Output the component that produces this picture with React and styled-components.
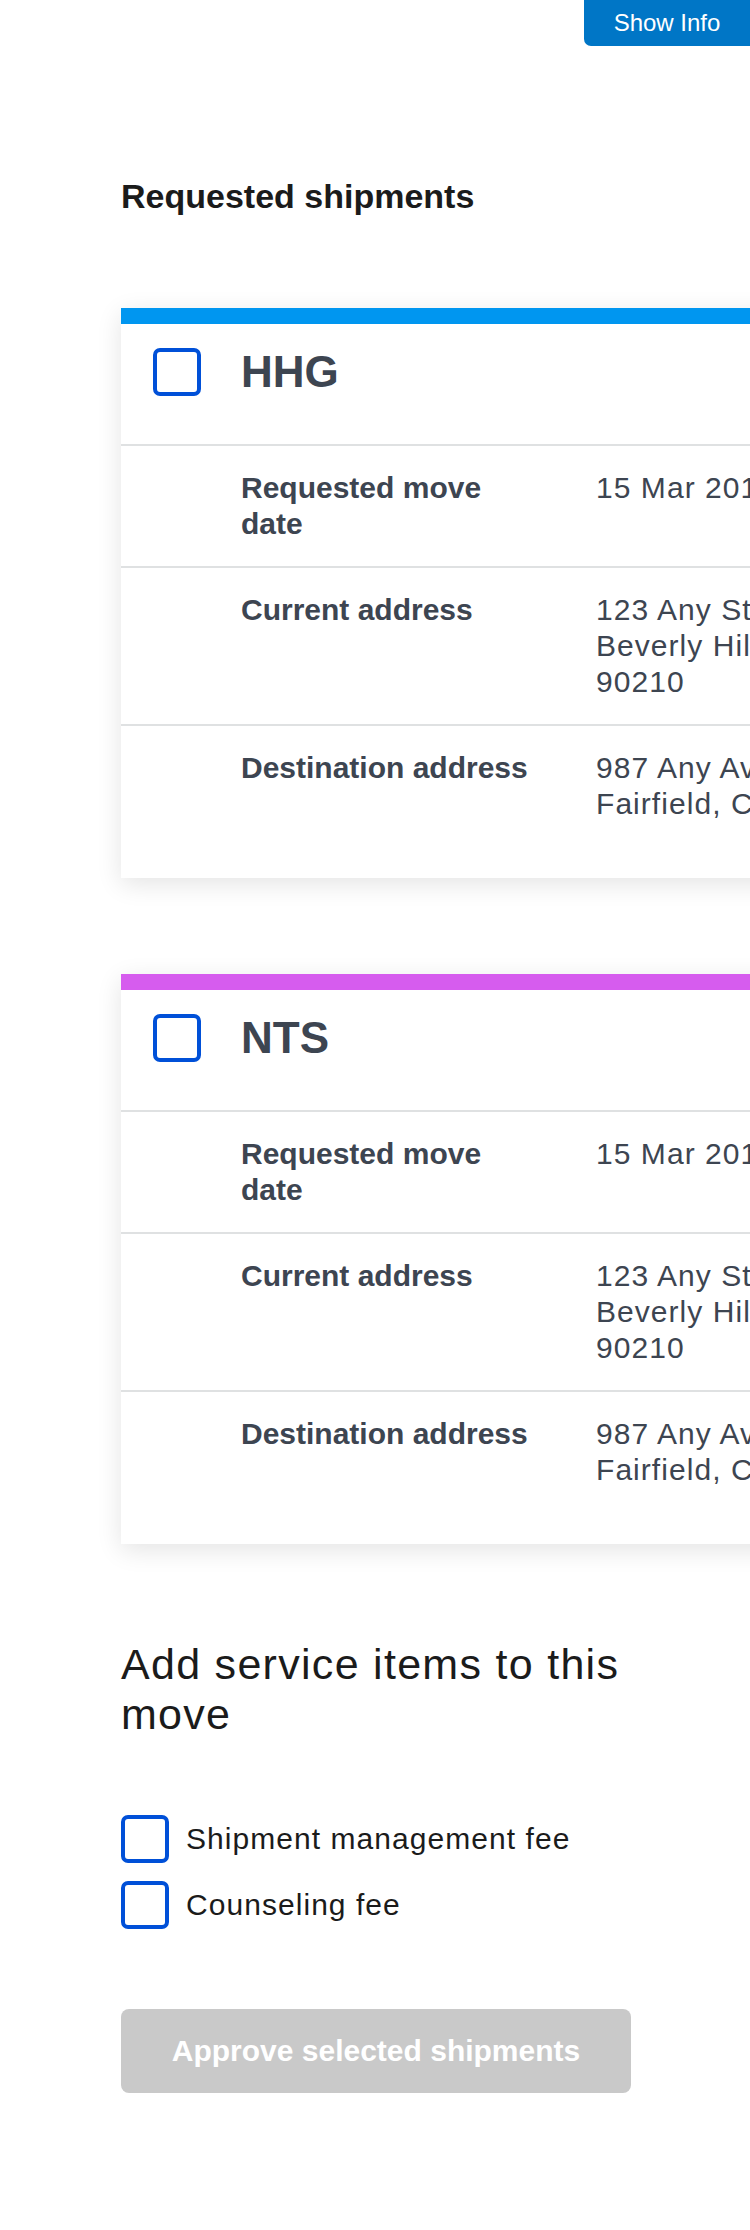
import React from "react";
import styled, { createGlobalStyle } from "styled-components";

const GlobalStyle = createGlobalStyle`
  html, body {
    margin: 0;
    padding: 0;
    overflow-x: hidden;
    background: #ffffff;
  }
  body {
    font-family: "Liberation Sans", Arial, sans-serif;
  }
`;

const Page = styled.div`
  position: relative;
  padding: 176px 0 120px 121px;
  min-height: 2230px;
  box-sizing: border-box;
`;

const InfoButton = styled.button`
  position: absolute;
  top: 0;
  right: 0;
  width: 166px;
  height: 46px;
  border: none;
  border-radius: 0 0 0 7px;
  background: #0076c6;
  color: #ffffff;
  font-family: "Liberation Sans", Arial, sans-serif;
  font-size: 24px;
  line-height: 46px;
  padding: 0;
  cursor: pointer;
`;

const SectionTitle = styled.h2`
  margin: 0;
  font-size: 34px;
  line-height: 40px;
  font-weight: 700;
  color: #1b1b1b;
`;

const CardList = styled.div`
  display: flex;
  flex-direction: column;
  gap: 96px;
  margin-top: 92px;
`;

const Card = styled.section`
  width: 900px;
  background: #ffffff;
  border-top: 16px solid ${(p) => p.$accent};
  padding-bottom: 32px;
  box-shadow: 0 6px 24px rgba(0, 0, 0, 0.11);
`;

const CardHeader = styled.div`
  display: flex;
  align-items: center;
  gap: 40px;
  padding: 24px 32px 48px;
`;

const Box = styled.span`
  display: inline-block;
  flex: 0 0 auto;
  width: 48px;
  height: 48px;
  box-sizing: border-box;
  border: 4px solid #0050d8;
  border-radius: 7px;
  background: #ffffff;
`;

const ShipmentType = styled.h3`
  margin: 0;
  font-size: 44px;
  line-height: 48px;
  font-weight: 700;
  color: #3d4551;
`;

const Row = styled.div`
  display: flex;
  border-top: 2px solid #dfe1e2;
  padding: 24px 0 24px 120px;
  font-size: 30px;
  line-height: 36px;
  color: #3d4551;
`;

const Label = styled.div`
  flex: 0 0 300px;
  margin-right: 55px;
  font-weight: 700;
`;

const Value = styled.div`
  letter-spacing: 0.035em;
  white-space: nowrap;
`;

const ServiceTitle = styled.h2`
  margin: 95px 0 0;
  width: 509px;
  font-size: 43px;
  line-height: 50px;
  font-weight: 400;
  letter-spacing: 0.03em;
  color: #1b1b1b;
`;

const OptionList = styled.div`
  display: flex;
  flex-direction: column;
  gap: 18px;
  margin-top: 76px;
`;

const Option = styled.label`
  display: flex;
  align-items: center;
  gap: 17px;
  font-size: 30px;
  line-height: 36px;
  letter-spacing: 0.035em;
  color: #1b1b1b;
`;

const ApproveButton = styled.button`
  display: block;
  margin-top: 80px;
  width: 510px;
  height: 84px;
  border: none;
  border-radius: 8px;
  background: #c9c9c9;
  color: #ffffff;
  font-family: "Liberation Sans", Arial, sans-serif;
  font-size: 30px;
  font-weight: 700;
  padding: 0;
  cursor: not-allowed;
`;

const shipments = [
  {
    type: "HHG",
    accent: "#0096f0",
  },
  {
    type: "NTS",
    accent: "#d65cee",
  },
];

const details = [
  { label: "Requested move date", lines: ["15 Mar 2018"] },
  {
    label: "Current address",
    lines: ["123 Any St.", "Beverly Hills, CA", "90210"],
  },
  { label: "Destination address", lines: ["987 Any Ave.", "Fairfield, CA 94535"] },
];

const ShipmentCard = ({ type, accent }) => (
  <Card $accent={accent}>
    <CardHeader>
      <Box />
      <ShipmentType>{type}</ShipmentType>
    </CardHeader>
    {details.map((d) => (
      <Row key={d.label}>
        <Label>{d.label}</Label>
        <Value>
          {d.lines.map((l) => (
            <div key={l}>{l}</div>
          ))}
        </Value>
      </Row>
    ))}
  </Card>
);

export default function App() {
  return (
    <>
      <GlobalStyle />
      <Page>
        <InfoButton>Show Info</InfoButton>
        <SectionTitle>Requested shipments</SectionTitle>
        <CardList>
          {shipments.map((s) => (
            <ShipmentCard key={s.type} {...s} />
          ))}
        </CardList>
        <ServiceTitle>Add service items to this move</ServiceTitle>
        <OptionList>
          <Option>
            <Box />
            Shipment management fee
          </Option>
          <Option>
            <Box />
            Counseling fee
          </Option>
        </OptionList>
        <ApproveButton disabled>Approve selected shipments</ApproveButton>
      </Page>
    </>
  );
}
